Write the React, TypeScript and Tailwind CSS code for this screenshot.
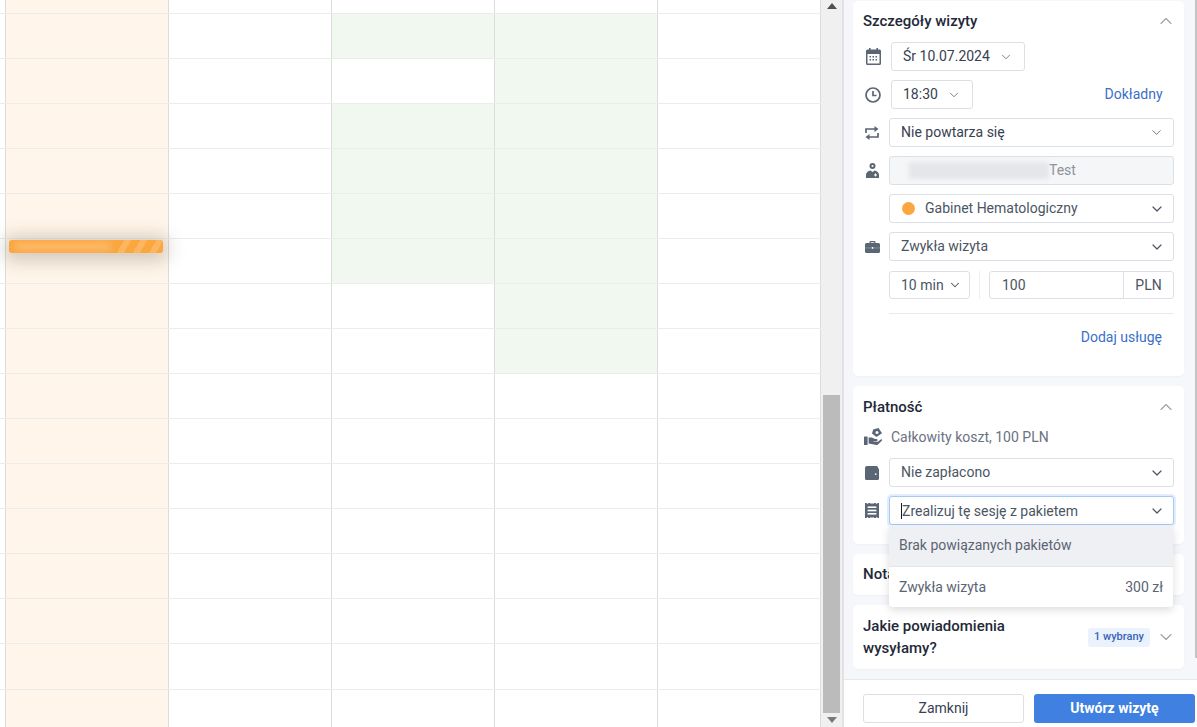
import React from 'react';
import { ChevronDown, ChevronUp } from 'lucide-react';

const rows = [14, 45, 45, 45, 45, 45, 45, 45, 45, 45, 45, 45, 45, 45, 45, 46, 38];
const greenA = new Set([1, 3, 4, 5, 6]);
const greenB = new Set([1, 2, 3, 4, 5, 6, 7, 8]);

function CalendarGrid() {
  return (
    <div className="relative w-[821px] h-[727px] overflow-hidden bg-white">
      {rows.map((h, r) => (
        <div key={r} className="flex border-b border-[#ececec] box-border" style={{ height: h }}>
          <div className="w-[6px] border-r border-[#dcdcdc] box-border" />
          {[0, 1, 2, 3, 4].map((c) => {
            const bg =
              c === 0 ? 'bg-[#fff5ea]' : (c === 2 && greenA.has(r)) || (c === 3 && greenB.has(r)) ? 'bg-[#f0f8f0]' : 'bg-white';
            return <div key={c} className={`w-[163px] border-r border-[#dcdcdc] box-border ${bg}`} />;
          })}
        </div>
      ))}
      <div className="absolute left-[9px] top-[240px] w-[154px] h-[13px] rounded-[3px] bg-[#fba63f] shadow-[0_2px_18px_5px_rgba(70,60,40,0.26)] overflow-hidden">
        <div className="absolute inset-y-0 right-0 w-[48px] bg-[repeating-linear-gradient(120deg,transparent_0,transparent_8px,#fcb660_8px,#fcb660_14px)]" />
        <div className="absolute left-[6px] top-[2px] w-[96px] h-[9px] bg-[#fcb868] blur-[3px]" />
      </div>
    </div>
  );
}

function Scrollbar() {
  return (
    <div className="relative w-[23px] h-[727px] bg-[#f0f0f0] border-r-2 border-[#e2e2e2] box-border flex flex-col items-center">
      <div className="mt-[3px] w-0 h-0 border-x-[5px] border-x-transparent border-b-[6px] border-b-[#505050]" />
      <div className="flex-1" />
      <div className="w-[17px] h-[318px] bg-[#bbbbbb]" />
      <div className="h-[14px] flex items-center justify-center">
        <div className="w-0 h-0 border-x-[5px] border-x-transparent border-t-[6px] border-t-[#7a7a7a]" />
      </div>
    </div>
  );
}

function Field({ children, className = '' }: { children: React.ReactNode; className?: string }) {
  return (
    <div className={`h-[29px] flex items-center rounded-[3px] border border-[#dcdfe6] bg-white box-border text-[14px] text-[#374151] ${className}`}>
      {children}
    </div>
  );
}

const C = '#5b6675';

function CalendarIcon() {
  return (
    <svg width="15" height="17" viewBox="0 0 15 17" fill={C}>
      <rect x="3" y="0" width="1.600" height="3" />
      <rect x="10.400" y="0" width="1.600" height="3" />
      <path d="M1.500 1.500h12A1.500 1.500 0 0 1 15 3v12.500a1.500 1.500 0 0 1-1.500 1.500h-12A1.500 1.500 0 0 1 0 15.500V3a1.500 1.500 0 0 1 1.500-1.500Zm0 4.500v9.500h12V6Z" fillRule="evenodd" />
      {[3.5, 6.5, 9.5].map((x) => <rect key={x} x={x} y="8" width="1.500" height="1.500" />)}
      {[3.5, 6.5, 9.5].map((x) => <rect key={x} x={x} y="11" width="1.500" height="1.500" />)}
    </svg>
  );
}

function ClockIcon() {
  return (
    <svg width="16" height="16" viewBox="0 0 16 16" fill="none" stroke={C} strokeWidth="1.700">
      <circle cx="8" cy="8" r="7" />
      <path d="M8 4v4.500h3.500" />
    </svg>
  );
}

function RepeatIcon() {
  return (
    <svg width="14" height="14" viewBox="0 0 14 14" fill={C}>
      <path d="M1 7V3h9" fill="none" stroke={C} strokeWidth="1.700" />
      <path d="M9.500 0 13.500 3l-4 3Z" />
      <path d="M13 7v4H4" fill="none" stroke={C} strokeWidth="1.700" />
      <path d="M4.500 8 .5 11l4 3Z" />
    </svg>
  );
}

function DoctorIcon() {
  return (
    <svg width="13" height="15" viewBox="0 0 13 15" fill={C}>
      <circle cx="6.500" cy="3" r="3" />
      <circle cx="6.500" cy="3" r="1" fill="#fff" />
      <path d="M0 15v-3C0 9.500 2 8 4.500 7.500L6.500 9l2-1.500C11 8 13 9.500 13 12v3Z" />
      <path d="M9 10.500h1v1h1v1h-1v1H9v-1H8v-1h1Z" fill="#fff" />
    </svg>
  );
}

function BriefcaseIcon() {
  return (
    <svg width="15" height="12" viewBox="0 0 15 12" fill={C}>
      <path d="M4.500 2V1a1 1 0 0 1 1-1h4a1 1 0 0 1 1 1v1h3a1.500 1.500 0 0 1 1.500 1.500V10.500A1.500 1.500 0 0 1 13.500 12h-12A1.500 1.500 0 0 1 0 10.500V3.500A1.500 1.500 0 0 1 1.500 2Zm1.300 0h3.400V1.300H5.800Z" fillRule="evenodd" />
      <rect x="0" y="6.600" width="15" height="0.700" fill="#fff" fillOpacity="0.35" />
      <rect x="6.800" y="6" width="1.400" height="1.800" fill="#fff" />
    </svg>
  );
}

function HandIcon() {
  return (
    <svg width="18" height="18" viewBox="0 0 18 18" fill={C}>
      <path d="M9.200 1.500 14.500 0 18 5.200 12.500 9 8 5.500Z" />
      <circle cx="13" cy="4.600" r="1.500" fill="#fff" />
      <rect x="0" y="8.500" width="3.600" height="8.500" rx="0.500" />
      <path d="M4.600 9.500h3.200L11 11h1.500a1 1 0 0 1 0 2.200H9.500v.6h4.300l3-2.300c.8-.5 1.800.5 1 1.300L14 16.500c-.5.400-1 .5-1.500.5L4.600 15.500Z" />
    </svg>
  );
}

function WalletIcon() {
  return (
    <svg width="14" height="14" viewBox="0 0 14 14" fill={C}>
      <path d="M2 0h9.500A1.500 1.500 0 0 1 13 1.500V2h-.2A1.500 1.500 0 0 1 14 3.500v9a1.500 1.500 0 0 1-1.500 1.500h-11A1.500 1.500 0 0 1 0 12.500v-10.500A2 2 0 0 1 2 0Z" />
      <rect x="9.800" y="7.200" width="1.800" height="1.800" rx="0.900" fill="#fff" />
    </svg>
  );
}

function ReceiptIcon() {
  return (
    <svg width="14" height="15" viewBox="0 0 14 15" fill={C}>
      <path d="M0 0h1.400l1.100 1 1.100-1h1.400l1.100 1L7 0l1.100 1 1.100-1h1.400l1.100 1 1.100-1H14v15h-1.200l-1.100-1-1.100 1H9.200l-1.100-1L7 15l-1.100-1-1.100 1H3.600l-1.100-1-1.100 1H0Z" />
      <rect x="2.600" y="3.400" width="8.800" height="1.600" fill="#fff" />
      <rect x="2.600" y="6.700" width="8.800" height="1.600" fill="#fff" />
      <rect x="2.600" y="10" width="8.800" height="1.600" fill="#fff" />
    </svg>
  );
}

function Card({ children, className = '' }: { children: React.ReactNode; className?: string }) {
  return <div className={`bg-white rounded-[5px] shrink-0 shadow-[0_1px_2px_rgba(0,0,0,0.03)] ${className}`}>{children}</div>;
}

function Panel() {
  return (
    <div className="relative w-[353px] h-[727px] bg-[#f5f7fa] flex flex-col overflow-hidden font-['Roboto',sans-serif]">
      <div className="h-[680px] border-b border-[#e7e9ee] box-border pl-[9px] pt-px flex flex-col gap-[10px]">
        <Card className="w-[331px] h-[375px] pl-[10px] pr-[10px]">
          <div className="h-[40px] flex items-center justify-between">
            <span className="text-[15px] font-medium text-[#1f2937]">Szczegóły wizyty</span>
            <ChevronUp size={20} strokeWidth={1.300} className="text-[#98a0aa] mr-[-2px]" />
          </div>
          <div className="flex items-center h-[29px] mt-px">
            <div className="w-[28px] pl-[3px] flex items-center"><CalendarIcon /></div>
            <Field className="w-[134px] pl-[11px] gap-[9px]">
              <span>Śr 10.07.2024</span>
              <ChevronDown size={14} strokeWidth={1.400} className="text-[#5f6773]" />
            </Field>
          </div>
          <div className="flex items-center h-[29px] mt-[9px]">
            <div className="w-[28px] pl-[2px] flex items-center"><ClockIcon /></div>
            <Field className="w-[82px] pl-[11px] gap-[9px]">
              <span>18:30</span>
              <ChevronDown size={14} strokeWidth={1.400} className="text-[#5f6773]" />
            </Field>
            <span className="ml-auto mr-[11.500px] text-[14px] text-[#3b6fc9]">Dokładny</span>
          </div>
          <div className="flex items-center h-[29px] mt-[9px]">
            <div className="w-[26px] pl-[2px] flex items-center"><RepeatIcon /></div>
            <Field className="w-[285px] pl-[11px] pr-[9px] justify-between">
              <span>Nie powtarza się</span>
              <ChevronDown size={15} strokeWidth={1.400} className="text-[#5f6773]" />
            </Field>
          </div>
          <div className="flex items-center h-[29px] mt-[9px]">
            <div className="w-[26px] flex items-center pl-[3px]"><DoctorIcon /></div>
            <Field className="w-[285px] pl-[19px] !bg-[#f5f6f8] !text-[#8c929b]">
              <div className="w-[140px] h-[17px] bg-[#e4e6e9] blur-[2px]" />
              <span>Test</span>
            </Field>
          </div>
          <div className="flex items-center h-[29px] mt-[9px]">
            <div className="w-[26px]" />
            <Field className="w-[285px] pl-[12px] pr-[8px]">
              <span className="w-[13px] h-[13px] rounded-full bg-[#fba63f] shrink-0" />
              <span className="ml-[10px] text-[#4b5563]">Gabinet Hematologiczny</span>
              <ChevronDown size={16} strokeWidth={1.800} className="ml-auto text-[#4b5563]" />
            </Field>
          </div>
          <div className="flex items-center h-[29px] mt-[9px]">
            <div className="w-[26px] pl-[2px] flex items-center"><BriefcaseIcon /></div>
            <Field className="w-[285px] pl-[11px] pr-[8px] justify-between">
              <span className="text-[#4b5563]">Zwykła wizyta</span>
              <ChevronDown size={16} strokeWidth={1.800} className="text-[#4b5563]" />
            </Field>
          </div>
          <div className="flex items-center h-[28px] mt-[10px] ml-[26px]">
            <Field className="!h-[28px] w-[81px] pl-[11px] gap-[4px]">
              <span className="text-[#4b5563]">10 min</span>
              <ChevronDown size={14} strokeWidth={1.800} className="text-[#4b5563]" />
            </Field>
            <div className="w-px h-[28px] bg-[#eceef1] mx-[9px]" />
            <Field className="!h-[28px] w-[185px]">
              <span className="flex-1 pl-[12px] text-[#4b5563]">100</span>
              <span className="w-[50px] h-full border-l border-[#dcdfe6] flex items-center justify-center text-[#4b5563]">PLN</span>
            </Field>
          </div>
          <div className="h-px bg-[#e8eaee] mt-[14px] ml-[26px]" />
          <div className="text-right pr-[12px] mt-[15px] text-[14px] text-[#3b6fc9] leading-[16px]">Dodaj usługę</div>
        </Card>

        <Card className="w-[331px] h-[158px] pl-[10px] pr-[10px]">
          <div className="h-[42px] flex items-center justify-between">
            <span className="text-[15px] font-medium text-[#1f2937]">Płatność</span>
            <ChevronUp size={20} strokeWidth={1.300} className="text-[#98a0aa] mr-[-2px]" />
          </div>
          <div className="flex items-center h-[20px] -mt-px">
            <div className="w-[28px] pl-px flex items-center"><HandIcon /></div>
            <span className="text-[14px] text-[#6b7280]">Całkowity koszt, 100 PLN</span>
          </div>
          <div className="flex items-center h-[29px] mt-[11px]">
            <div className="w-[26px] pl-[2px] flex items-center"><WalletIcon /></div>
            <Field className="w-[285px] pl-[11px] pr-[8px] justify-between">
              <span className="text-[#4b5563]">Nie zapłacono</span>
              <ChevronDown size={16} strokeWidth={1.800} className="text-[#4b5563]" />
            </Field>
          </div>
          <div className="flex items-center h-[29px] mt-[9px]">
            <div className="w-[26px] pl-[2px] flex items-center"><ReceiptIcon /></div>
            <Field className="w-[285px] pl-[11px] pr-[8px] justify-between !border-[#a9c9f5] shadow-[0_0_0_2px_rgba(120,170,240,0.22)]">
              <span className="text-[#4b5563] border-l border-[#111827] leading-[16px]">Zrealizuj tę sesję z pakietem</span>
              <ChevronDown size={16} strokeWidth={1.800} className="text-[#4b5563]" />
            </Field>
          </div>
        </Card>

        <Card className="w-[331px] h-[41px] pl-[10px] flex items-center">
          <span className="text-[15px] font-medium text-[#1f2937]">Notatki</span>
        </Card>

        <Card className="w-[331px] h-[64px] pl-[10px] pr-[10px] flex items-center">
          <span className="w-[190px] text-[15px] font-medium text-[#1f2937] leading-[22px]">Jakie powiadomienia wysyłamy?</span>
          <span className="ml-auto h-[19px] w-[62px] rounded-[3px] bg-[#eaf2fd] text-[11px] font-medium text-[#3b63b8] flex items-center justify-center">1 wybrany</span>
          <ChevronDown size={20} strokeWidth={1.300} className="text-[#98a0aa] ml-[6px] mr-[-2px]" />
        </Card>
      </div>

      <div className="flex-1 bg-white flex items-start gap-[10px] pl-[19px] pt-[14px]">
        <button className="w-[161px] h-[29px] rounded-[3px] border border-[#dcdfe6] bg-white text-[14px] text-[#374151] box-border">Zamknij</button>
        <button className="w-[161px] h-[29px] rounded-[3px] bg-[#3f80e0] text-[14px] font-bold text-white">Utwórz wizytę</button>
      </div>

      <div className="absolute left-[45px] top-[525px] w-[284px] h-[82px] bg-white rounded-b-[4px] shadow-[0_3px_8px_rgba(0,0,0,0.14)] text-[14px] text-[#5b6472] overflow-hidden">
        <div className="h-[42px] bg-[#eef0f4] border-b border-[#e3e5ea] box-border pl-[10px] flex items-center">Brak powiązanych pakietów</div>
        <div className="h-[40px] px-[10px] flex items-center justify-between">
          <span>Zwykła wizyta</span>
          <span>300 zł</span>
        </div>
      </div>

      <div className="absolute right-0 top-0 w-[2px] h-[658px] bg-[#c4c4c4]" />
    </div>
  );
}

export default function App() {
  return (
    <div className="flex w-[1197px] h-[727px] overflow-hidden">
      <CalendarGrid />
      <Scrollbar />
      <Panel />
    </div>
  );
}
